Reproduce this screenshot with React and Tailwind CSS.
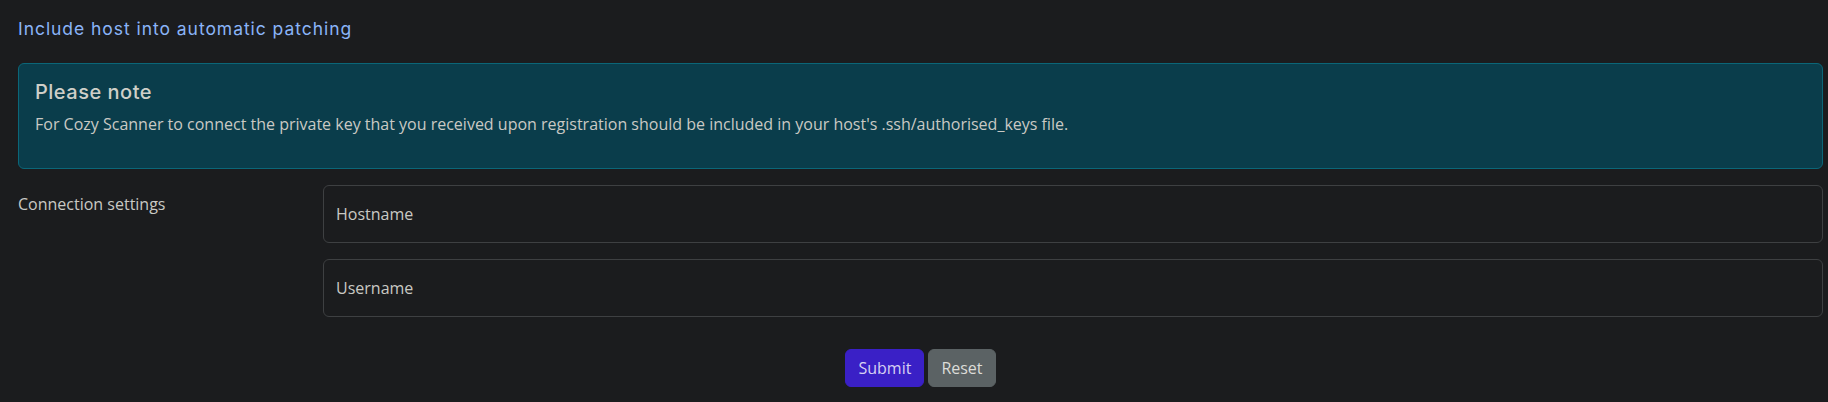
export default function App() {
    return (
        <div className="min-h-[402px] bg-[#1b1c1e] text-[#c9c9c4] font-['Open_Sans',sans-serif]">
            <div className="ml-[18px] w-[1805px] pt-[18px]">

                {/* Page title */}
                <h5 className="font-['Inter',sans-serif] text-[17.5px] leading-[21px] tracking-[0.95px] text-[#8ab4f8] mb-[24px]">
                    Include host into automatic patching
                </h5>

                {/* Note */}
                <div className="rounded-md border border-[#0b6678] bg-[#0a3d4b] px-4 py-4 mb-4">
                    <h4 className="font-['Inter',sans-serif] text-[20px] leading-6 font-medium tracking-[0.5px] text-[#cfcfc8] mb-2">
                        Please note
                    </h4>
                    <p className="text-[16px] leading-6 mb-4">
                        For Cozy Scanner to connect the private key that you received upon registration should be included in your host's .ssh/authorised_keys file.
                    </p>
                </div>

                {/* Connection settings */}
                <div className="flex">
                    <div className="w-[305px] shrink-0 pt-[7px] text-[16px] leading-6">Connection settings</div>
                    <div className="flex-1 flex flex-col gap-4">
                        <input
                            placeholder="Hostname"
                            className="h-[58px] rounded-md border border-[#3e4042] bg-[#1b1c1e] px-3 text-[16px] outline-none placeholder:text-[#c9c9c4]"
                        />
                        <input
                            placeholder="Username"
                            className="h-[58px] rounded-md border border-[#3e4042] bg-[#1b1c1e] px-3 text-[16px] outline-none placeholder:text-[#c9c9c4]"
                        />
                    </div>
                </div>

                <div className="flex justify-center gap-1 mt-8">
                    <button className="h-[38px] rounded-md bg-[#3a20c6] border border-[#3a20c6] px-3 text-[16px] text-[#d6d1f2]">Submit</button>
                    <button className="h-[38px] rounded-md bg-[#5b6264] border border-[#5b6264] px-3 text-[16px] text-[#dcdcd8]">Reset</button>
                </div>
            </div>
        </div>
    );
}
